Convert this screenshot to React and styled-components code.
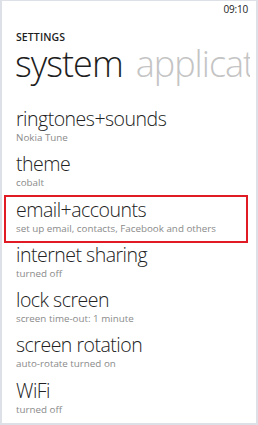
import styled, { createGlobalStyle } from "styled-components";

const items = [
  { title: "ringtones+sounds", sub: "Nokia Tune" },
  { title: "theme", sub: "cobalt" },
  { title: "email+accounts", sub: "set up email, contacts, Facebook and others", selected: true },
  { title: "internet sharing", sub: "turned off" },
  { title: "lock screen", sub: "screen time-out: 1 minute" },
  { title: "screen rotation", sub: "auto-rotate turned on" },
  { title: "WiFi", sub: "turned off" },
];

export default function App() {
  return (
    <>
      <Global />
      <Screen>
        <StatusBar>
          <Clock>09:10</Clock>
        </StatusBar>
        <AppTitle>SETTINGS</AppTitle>
        <Pivot>
          <PivotItem $active>system</PivotItem>
          <PivotItem>applications</PivotItem>
        </Pivot>
        <List>
          {items.map((item) => (
            <Row key={item.title} $selected={item.selected}>
              <Title>{item.title}</Title>
              <Sub>{item.sub}</Sub>
            </Row>
          ))}
        </List>
      </Screen>
    </>
  );
}

const Global = createGlobalStyle`
  html, body {
    margin: 0;
    padding: 0;
    background: #ffffff;
  }
`;

const Screen = styled.div`
  box-sizing: border-box;
  width: 258px;
  height: 425px;
  overflow: hidden;
  border: 2px solid #dde0e6;
  border-top-width: 1px;
  background: #ffffff;
  font-family: "Open Sans", "Noto Sans", sans-serif;
  color: #1e1e1e;
`;

const StatusBar = styled.div`
  display: flex;
  justify-content: flex-end;
  height: 22px;
  padding: 1px 8px 0 0;
  box-sizing: border-box;
`;

const Clock = styled.span`
  font-size: 10px;
  line-height: 14px;
  letter-spacing: -0.2px;
  color: #222;
`;

const AppTitle = styled.div`
  margin: 7px 0 0 14px;
  font-size: 10.5px;
  font-weight: 600;
  line-height: 14px;
  letter-spacing: 0.1px;
  color: #1e1e1e;
`;

const Pivot = styled.div`
  display: flex;
  gap: 13px;
  margin: 0 6px 0 13px;
  overflow: hidden;
  white-space: nowrap;
  height: 44px;
`;

const PivotItem = styled.span`
  font-size: 36px;
  font-weight: 300;
  line-height: 40px;
  letter-spacing: -1px;
  color: ${(p) => (p.$active ? "#1e1e1e" : "#c4c4c4")};
`;

const List = styled.div`
  display: flex;
  flex-direction: column;
  padding: 16px 0 0 0;
`;

const Row = styled.div`
  position: relative;
  display: flex;
  flex-direction: column;
  flex: none;
  height: 45.3px;
  box-sizing: border-box;
  margin: 0 8px 0 2px;
  padding: 4px 0 0 12px;

  &::after {
    content: "";
    display: ${(p) => (p.$selected ? "block" : "none")};
    position: absolute;
    top: 0;
    left: 0;
    right: 0;
    height: 48px;
    box-sizing: border-box;
    border: 2px solid #e01b24;
  }
`;

const Title = styled.div`
  font-size: 19.5px;
  font-weight: 350;
  line-height: 22px;
  letter-spacing: -0.5px;
  color: #222;
`;

const Sub = styled.div`
  margin-top: 2px;
  font-size: 9.8px;
  line-height: 12px;
  color: #8a8a8a;
`;
